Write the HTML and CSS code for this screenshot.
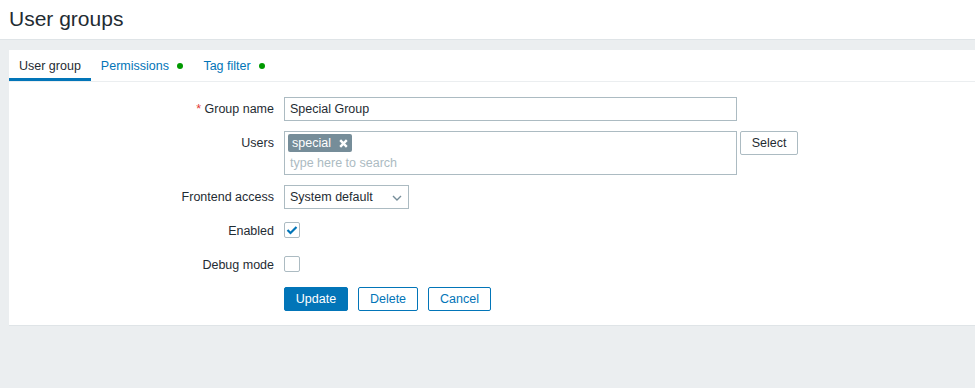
FILE: index.html
```html
<!DOCTYPE html>
<html>
<head>
<meta charset="utf-8">
<link rel="stylesheet" href="styles.css">
</head>
<body>
<header class="page-header">
  <h1 class="page-title">User groups</h1>
</header>
<main class="wrapper">
  <section class="card">
    <nav class="tabs">
      <span class="tab active">User group</span>
      <span class="tab">Permissions <span class="dot"></span></span>
      <span class="tab">Tag filter <span class="dot"></span></span>
    </nav>
    <form class="form-grid">
      <label class="label"><span class="req">*</span> Group name</label>
      <div class="field"><input class="text-input wide" type="text" value="Special Group"></div>

      <label class="label">Users</label>
      <div class="field field-row">
        <div class="multiselect">
          <span class="tag">special <svg class="tag-x" width="9" height="9" viewBox="0 0 9 9"><path d="M1.2 1.2 L7.8 7.8 M7.8 1.2 L1.2 7.8" stroke="#fff" stroke-width="2.4" stroke-linecap="butt"/></svg></span>
          <span class="placeholder">type here to search</span>
        </div>
        <button type="button" class="btn-alt">Select</button>
      </div>

      <label class="label">Frontend access</label>
      <div class="field">
        <div class="select">System default
          <svg class="chev" width="10" height="6" viewBox="0 0 10 6"><path d="M1 1 L5 5 L9 1" fill="none" stroke="#768d99" stroke-width="1.4"/></svg>
        </div>
      </div>

      <label class="label">Enabled</label>
      <div class="field"><span class="checkbox"><svg width="12" height="10" viewBox="0 0 12 10"><path d="M1.5 5 L4.5 8 L10.5 2" fill="none" stroke="#0275b8" stroke-width="2.2"/></svg></span></div>

      <label class="label">Debug mode</label>
      <div class="field"><span class="checkbox"></span></div>

      <span></span>
      <div class="field buttons">
        <button type="button" class="btn primary">Update</button>
        <button type="button" class="btn outline b-delete">Delete</button>
        <button type="button" class="btn outline b-cancel">Cancel</button>
      </div>
    </form>
  </section>
</main>
</body>
</html>
```
FILE: styles.css
```css
* { box-sizing: border-box; }
html, body { margin: 0; padding: 0; }
body {
  background: #ebeef0;
  font-family: Arial, "Liberation Sans", sans-serif;
  font-size: 12.5px;
  color: #1f2c33;
  height: 388px;
  overflow: hidden;
}
.page-header {
  background: #fff;
  height: 40px;
  border-bottom: 1px solid #dfe4e7;
  padding: 0 9px;
}
.page-title {
  margin: 0;
  font-weight: normal;
  font-size: 21px;
  line-height: 38px;
  color: #1f2c33;
}
.wrapper {
  padding: 10px 0 0 9px;
}
.card {
  background: #fff;
  border-bottom: 1px solid #dfe4e7;
}
.tabs {
  display: flex;
  height: 32px;
  border-bottom: 1px solid #ebeef0;
}
.tab {
  display: flex;
  align-items: center;
  padding: 3px 10px 0 10px;
  height: 31px;
  color: #0275b8;
  border-bottom: 3px solid transparent;
  white-space: pre;
}
.tab.active {
  color: #1f2c33;
  border-bottom-color: #0275b8;
}
.dot {
  display: inline-block;
  width: 6px;
  height: 6px;
  border-radius: 50%;
  background: #009900;
  margin-left: 5px;
  margin-top: 1px;
}
.form-grid {
  display: grid;
  grid-template-columns: 265px 1fr;
  column-gap: 10px;
  row-gap: 10px;
  padding: 15px 0 14px 0;
  margin: 0;
}
.label {
  text-align: right;
  line-height: 24px;
}
.req { color: #e33734; }
.field { display: flex; align-items: flex-start; }
.field-row { gap: 3px; }
.text-input {
  height: 24px;
  border: 1px solid #acbbc2;
  padding: 0 5px;
  font-family: Arial, "Liberation Sans", sans-serif;
  font-size: 12.5px;
  color: #1f2c33;
  outline: none;
}
.wide { width: 453px; }
.multiselect {
  width: 453px;
  height: 44px;
  border: 1px solid #acbbc2;
  padding: 2px 3px 0 3px;
  display: flex;
  flex-direction: column;
  align-items: flex-start;
}
.tag {
  display: inline-flex;
  align-items: center;
  height: 18px;
  width: 64px;
  background: #768d99;
  color: #fff;
  padding: 0 0 0 4px;
  border-radius: 2px;
  font-size: 12.5px;
}
.tag-x { margin-left: 8px; }
.placeholder {
  color: #acbbc2;
  padding-left: 2px;
  padding-top: 1px;
  line-height: 20px;
}
.btn-alt {
  width: 58px;
  height: 24px;
  background: #fff;
  border: 1px solid #acbbc2;
  border-radius: 2px;
  font-family: Arial, "Liberation Sans", sans-serif;
  font-size: 12.5px;
  color: #1f2c33;
  padding: 0;
}
.select {
  width: 125px;
  height: 24px;
  border: 1px solid #acbbc2;
  padding: 0 0 0 5px;
  line-height: 22px;
  display: flex;
  align-items: center;
  justify-content: space-between;
  padding-right: 6px;
}
.chev { margin-top: 1px; }
.checkbox {
  width: 16px;
  height: 16px;
  border: 1px solid #acbbc2;
  border-radius: 2px;
  margin-top: 3px;
  display: flex;
  align-items: center;
  justify-content: center;
}
.buttons { gap: 10px; }
.btn {
  height: 24px;
  border-radius: 2px;
  font-family: Arial, "Liberation Sans", sans-serif;
  font-size: 12.5px;
  padding: 0;
}
.primary {
  width: 64px;
  background: #0275b8;
  border: 1px solid #0275b8;
  color: #fff;
}
.outline {
  background: #fff;
  border: 1px solid #0275b8;
  color: #0275b8;
}
.b-delete { width: 60px; }
.b-cancel { width: 63px; }
```
